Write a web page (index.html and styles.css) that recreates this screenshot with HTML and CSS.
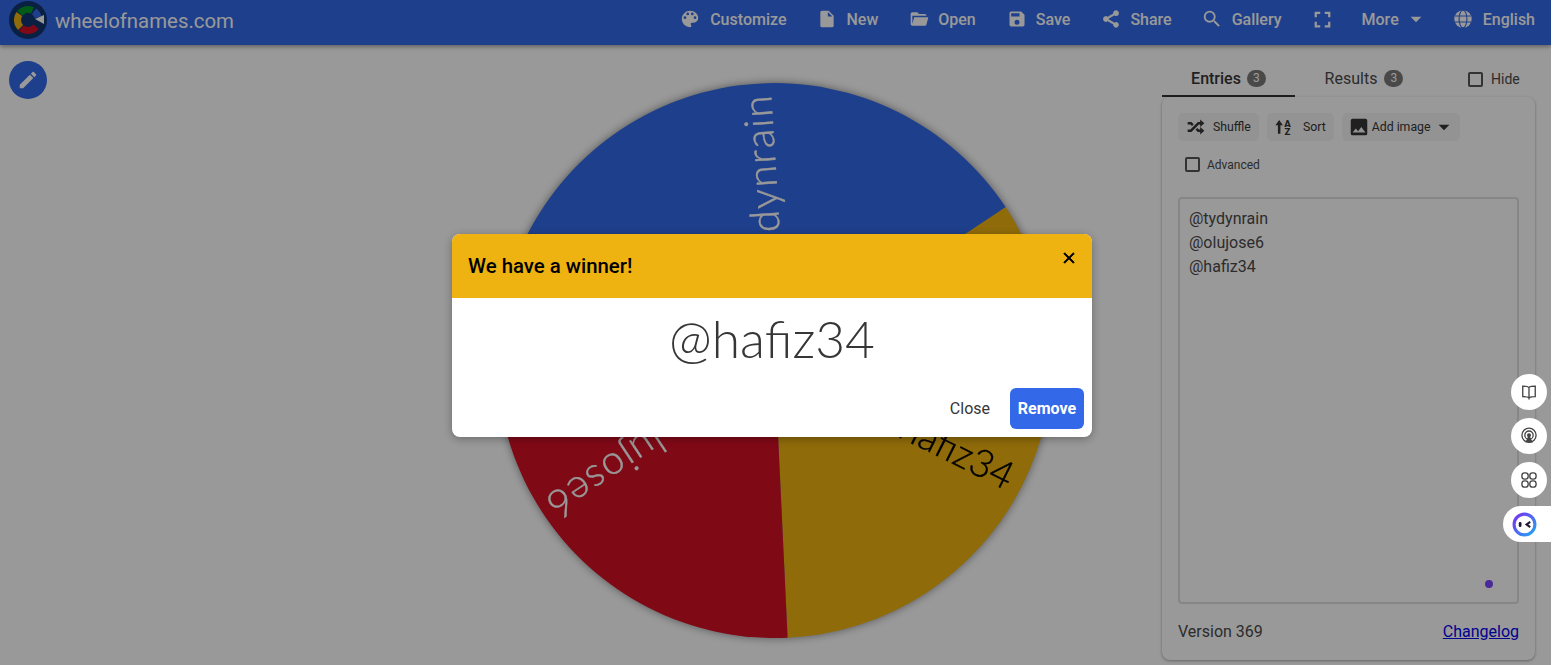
FILE: index.html
```html
<!DOCTYPE html>
<html lang="en">
<head>
  <meta charset="UTF-8" />
  <title>Wheel of Names</title>
  <link rel="stylesheet" href="styles.css">
</head>
<body>
<div class="app">
  <header class="topbar">
    <a class="brand">
      <svg class="logo" viewBox="0 0 38 38">
        <circle cx="19" cy="19" r="19" fill="#12366f"/>
        <g fill="none" stroke-width="7">
          <path d="M10.96 12.25A10.5 10.5 0 0 1 23.44 9.48" stroke="#009925"/>
          <path d="M25.02 10.4A10.5 10.5 0 0 1 29.14 16.28" stroke="#3369e8"/>
          <path d="M11.58 26.42A10.5 10.5 0 0 1 10.4 12.97" stroke="#eeb211"/>
          <path d="M27.04 25.75A10.5 10.5 0 0 1 12.25 27.04" stroke="#d50f25"/>
        </g>
        <path d="M26 18L35 14V23Z" fill="#fff"/>
      </svg>
      <span class="brand-name">wheelofnames.com</span>
    </a>
    <nav class="menu">
      <a class="menu-item"><svg class="ico" viewBox="0 0 24 24"><path d="M17.5,12A1.5,1.5 0 0,1 16,10.5A1.5,1.5 0 0,1 17.5,9A1.5,1.5 0 0,1 19,10.5A1.5,1.5 0 0,1 17.5,12M14.5,8A1.5,1.5 0 0,1 13,6.5A1.5,1.5 0 0,1 14.5,5A1.5,1.5 0 0,1 16,6.5A1.5,1.5 0 0,1 14.5,8M9.5,8A1.5,1.5 0 0,1 8,6.5A1.5,1.5 0 0,1 9.5,5A1.5,1.5 0 0,1 11,6.5A1.5,1.5 0 0,1 9.5,8M6.5,12A1.5,1.5 0 0,1 5,10.5A1.5,1.5 0 0,1 6.5,9A1.5,1.5 0 0,1 8,10.5A1.5,1.5 0 0,1 6.5,12M12,3A9,9 0 0,0 3,12A9,9 0 0,0 12,21A1.5,1.5 0 0,0 13.5,19.5C13.5,19.11 13.35,18.76 13.11,18.5C12.88,18.23 12.73,17.88 12.73,17.5A1.5,1.5 0 0,1 14.23,16H16A5,5 0 0,0 21,11C21,6.58 16.97,3 12,3Z"/></svg>Customize</a>
      <a class="menu-item"><svg class="ico ico-sm" viewBox="0 0 24 24"><path d="M13,9V3.5L18.5,9M6,2C4.89,2 4,2.89 4,4V20A2,2 0 0,0 6,22H18A2,2 0 0,0 20,20V8L14,2H6Z"/></svg>New</a>
      <a class="menu-item"><svg class="ico ico-sm" viewBox="0 0 24 24"><path d="M19,20H4C2.89,20 2,19.1 2,18V6C2,4.89 2.89,4 4,4H10L12,6H19A2,2 0 0,1 21,8H21L4,8V18L6.14,10H23.21L20.93,18.5C20.7,19.37 19.92,20 19,20Z"/></svg>Open</a>
      <a class="menu-item"><svg class="ico ico-sm" viewBox="0 0 24 24"><path d="M15,9H5V5H15M12,19A3,3 0 0,1 9,16A3,3 0 0,1 12,13A3,3 0 0,1 15,16A3,3 0 0,1 12,19M17,3H5C3.89,3 3,3.9 3,5V19A2,2 0 0,0 5,21H19A2,2 0 0,0 21,19V7L17,3Z"/></svg>Save</a>
      <a class="menu-item"><svg class="ico ico-sm" viewBox="0 0 24 24"><path d="M18,16.08C17.24,16.08 16.56,16.38 16.04,16.85L8.91,12.7C8.96,12.47 9,12.24 9,12C9,11.76 8.96,11.53 8.91,11.3L15.96,7.19C16.5,7.69 17.21,8 18,8A3,3 0 0,0 21,5A3,3 0 0,0 18,2A3,3 0 0,0 15,5C15,5.24 15.04,5.47 15.09,5.7L8.04,9.81C7.5,9.31 6.79,9 6,9A3,3 0 0,0 3,12A3,3 0 0,0 6,15C6.79,15 7.5,14.69 8.04,14.19L15.16,18.34C15.11,18.55 15.08,18.77 15.08,19C15.08,20.61 16.39,21.91 18,21.91C19.61,21.91 20.92,20.61 20.92,19A2.92,2.92 0 0,0 18,16.08Z" stroke="currentColor" stroke-width="1"/></svg>Share</a>
      <a class="menu-item"><svg class="ico" viewBox="0 0 24 24"><path d="M9.5,3A6.5,6.5 0 0,1 16,9.5C16,11.11 15.41,12.59 14.44,13.73L14.71,14H15.5L20.5,19L19,20.5L14,15.5V14.71L13.73,14.44C12.59,15.41 11.11,16 9.5,16A6.5,6.5 0 0,1 3,9.5A6.5,6.5 0 0,1 9.5,3M9.5,5C7,5 5,7 5,9.5C5,12 7,14 9.5,14C12,14 14,12 14,9.5C14,7 12,5 9.5,5Z"/></svg>Gallery</a>
      <a class="menu-item"><svg class="ico ico-full" viewBox="0 0 24 24"><path d="M5,5H10V7H7V10H5V5M14,5H19V10H17V7H14V5M17,14H19V19H14V17H17V14M10,17V19H5V14H7V17H10Z"/></svg></a>
      <a class="menu-item">More<svg class="ico caret" viewBox="0 0 24 24"><path d="M7,10L12,15L17,10H7Z"/></svg></a>
      <a class="menu-item"><svg class="ico" viewBox="0 0 24 24"><circle cx="12" cy="12" r="9.5"/><g fill="none" stroke="#3369e8" stroke-width="1.2"><ellipse cx="12" cy="12" rx="4.3" ry="9.5"/><path d="M3 8.8H21M3 15.2H21"/></g></svg>English</a>
    </nav>
  </header>

  <main class="main">
    <section class="wheel-area">
      <button class="edit-btn"><svg class="ico" viewBox="0 0 24 24"><path d="M20.71,7.04C21.1,6.65 21.1,6 20.71,5.63L18.37,3.29C18,2.9 17.35,2.9 16.96,3.29L15.12,5.12L18.87,8.87M3,17.25V21H6.75L17.81,9.93L14.06,6.18L3,17.25Z"/></svg></button>
      <svg class="wheel" viewBox="0 0 555 555">
        <path d="M277.5 277.5L508.6 124A277.5 277.5 0 0 1 290.6 554.7Z" fill="#eeb211"/>
        <path d="M277.5 277.5L290.6 554.7A277.5 277.5 0 0 1 29.2 153.7Z" fill="#d50f25"/>
        <path d="M277.5 277.5L29.2 153.7A277.5 277.5 0 0 1 508.6 124Z" fill="#3369e8"/>
        <text class="wheel-label label-wide" transform="translate(277.5 277.5) rotate(-93.5)" x="267" y="13" fill="#fff" stroke="#fff">@tydynrain</text>
        <text class="wheel-label" transform="translate(277.5 277.5) rotate(26.5)" x="265" y="13" fill="#000" stroke="#000">@hafiz34</text>
        <text class="wheel-label label-wide" transform="translate(277.5 277.5) rotate(146.5)" x="270" y="13" fill="#fff" stroke="#fff">@olujose6</text>
      </svg>
    </section>

    <aside class="sidebar">
      <div class="tabs">
        <div class="tab tab-active">Entries <span class="badge">3</span></div>
        <div class="tab tab-results">Results <span class="badge">3</span></div>
        <label class="check hide-check"><span class="box"></span>Hide</label>
      </div>
      <div class="card">
        <div class="tools">
          <button class="tool"><svg class="ico" viewBox="0 0 24 24"><path d="M17,3L22,7.5L17,12V9H15.5L6.5,18H2V15H5.26L14.26,6H17V3M17,12L22,16.5L17,21V18H14.26L11.44,15.18L13.56,13.06L15.5,15H17V12M2,6H6.5L9.32,8.82L7.2,10.94L5.26,9H2V6Z"/></svg>Shuffle</button>
          <button class="tool tool-sort"><svg class="ico" viewBox="0 0 24 24"><path d="M5 3.5L9.5 10H6.5V20H3.5V10H.5Z"/><text class="az" x="15" y="11.5">A</text><text class="az" x="15" y="21">Z</text></svg>Sort</button>
          <button class="tool tool-image"><svg class="ico" viewBox="0 0 24 24"><path d="M8.5,13.5L11,16.5L14.5,12L19,18H5M21,19V5C21,3.89 20.1,3 19,3H5A2,2 0 0,0 3,5V19A2,2 0 0,0 5,21H19A2,2 0 0,0 21,19Z"/></svg>Add image<svg class="ico tool-caret" viewBox="0 0 24 24"><path d="M7,10L12,15L17,10H7Z"/></svg></button>
        </div>
        <label class="check adv-check"><span class="box"></span>Advanced</label>
        <div class="entries">
          <div>@tydynrain</div>
          <div>@olujose6</div>
          <div>@hafiz34</div>
          <span class="dot"></span>
        </div>
        <div class="card-foot">
          <span>Version 369</span>
          <a class="link" href="#">Changelog</a>
        </div>
      </div>
    </aside>
  </main>

  <div class="overlay">
    <div class="modal">
      <div class="modal-head">
        <span class="modal-title">We have a winner!</span>
        <svg class="modal-x" viewBox="0 0 24 24"><path d="M19,6.41L17.59,5L12,10.59L6.41,5L5,6.41L10.59,12L5,17.59L6.41,19L12,13.41L17.59,19L19,17.59L13.41,12L19,6.41Z"/></svg>
      </div>
      <div class="modal-body">@hafiz34</div>
      <div class="modal-foot">
        <button class="btn-plain">Close</button>
        <button class="btn-remove">Remove</button>
      </div>
    </div>
  </div>

  <div class="widgets">
    <div class="widget">
      <svg viewBox="0 0 24 24"><path d="M12 6.5C10.5 5.2 8 5 4.5 5V17.5C8 17.5 10.5 17.8 12 19C13.5 17.8 16 17.5 19.5 17.5V5C16 5 13.5 5.2 12 6.5ZM12 6.5V21"/></svg>
    </div>
    <div class="widget">
      <svg viewBox="0 0 24 24"><circle cx="12" cy="11" r="8.5"/><circle cx="12" cy="11" r="5"/><circle cx="12" cy="11" r="1.6" fill="#444"/><path d="M12 12L8.8 19H15.2Z" fill="#444"/></svg>
    </div>
    <div class="widget">
      <svg viewBox="0 0 24 24"><rect x="3.5" y="3.5" width="7.5" height="7.5" rx="3.2"/><rect x="13" y="3.5" width="7.5" height="7.5" rx="3.2"/><rect x="3.5" y="13" width="7.5" height="7.5" rx="3.2"/><rect x="13" y="13" width="7.5" height="7.5" rx="3.2"/></svg>
    </div>
    <div class="widget-pill">
      <svg viewBox="0 0 24 24">
        <defs><linearGradient id="ring" x1="0" y1="0" x2="1" y2="1"><stop offset="0" stop-color="#7b2ff0"/><stop offset="1" stop-color="#21a6f3"/></linearGradient></defs>
        <circle cx="12" cy="12" r="10" fill="none" stroke="url(#ring)" stroke-width="3"/>
        <rect x="6.5" y="9.5" width="2.6" height="5" rx="1.2" fill="#1c1c2e"/>
        <path d="M17.5 9.5L14 12L17.5 14.5" fill="none" stroke="#1c1c2e" stroke-width="2"/>
      </svg>
    </div>
  </div>
</div>
</body>
</html>
```

FILE: styles.css
```css
* {
  margin: 0;
  padding: 0;
  box-sizing: border-box;
}

html, body {
  height: 100%;
  overflow: hidden;
  background: #fff;
  font-family: Roboto, "Liberation Sans", sans-serif;
  color: #363636;
}

button {
  font-family: inherit;
  border: 0;
  background: none;
}

.app {
  position: relative;
  width: 1551px;
  height: 665px;
  overflow: hidden;
  display: flex;
  flex-direction: column;
  background: #fff;
}

.ico {
  width: 22px;
  height: 22px;
  fill: currentColor;
  flex: none;
}

/* top bar */
.topbar {
  height: 45px;
  flex: none;
  display: flex;
  align-items: center;
  justify-content: space-between;
  padding: 0 16px 0 9px;
  background: #3369e8;
  color: #fff;
  box-shadow: 0 2px 4px rgba(0,0,0,0.35);
  position: relative;
  z-index: 2;
}

.brand {
  display: flex;
  align-items: center;
  gap: 8px;
  margin-top: -5px;
}

.logo {
  width: 38px;
  height: 38px;
}

.brand-name {
  font-size: 20.4px;
  margin-top: 1px;
}

.menu {
  display: flex;
  align-items: center;
  gap: 29px;
  margin-top: -7px;
}

.menu-item {
  display: flex;
  align-items: center;
  gap: 9px;
  font-size: 16px;
  font-weight: 500;
}

.ico-sm {
  width: 20px;
  height: 20px;
  margin-left: 2px;
}

.ico-full {
  width: 27px;
  height: 27px;
  margin: 0 -3px 0 -2px;
}

.caret {
  width: 26px;
  height: 26px;
  margin-left: -5px;
  margin-right: -6px;
}

/* wheel */
.main {
  flex: 1;
  min-height: 0;
  display: flex;
}

.wheel-area {
  flex: 1;
  position: relative;
  display: flex;
  justify-content: flex-end;
  padding: 38px 110px 0 0;
}

.edit-btn {
  position: absolute;
  left: 9px;
  top: 16px;
  width: 38px;
  height: 38px;
  border-radius: 50%;
  background: #3369e8;
  color: #fff;
  display: flex;
  align-items: center;
  justify-content: center;
}

.wheel {
  width: 555px;
  height: 555px;
  overflow: visible;
  filter: drop-shadow(0 0 4px rgba(0,0,0,0.45));
}

.wheel-label {
  font-family: Lato, "Open Sans", sans-serif;
  font-weight: 300;
  font-size: 38.5px;
  stroke-width: 0.4px;
  text-anchor: end;
}

.label-wide {
  font-size: 40px;
  letter-spacing: 1.5px;
}

/* right side */
.sidebar {
  width: 373px;
  flex: none;
  margin-right: 16px;
  padding-top: 15px;
  display: flex;
  flex-direction: column;
}

.tabs {
  height: 37px;
  flex: none;
  display: flex;
  align-items: flex-start;
}

.tab {
  width: 133px;
  height: 37px;
  display: flex;
  justify-content: center;
  align-items: center;
  gap: 6px;
  font-size: 16px;
  color: #4a4a4a;
  padding-bottom: 1px;
}

.tab-results {
  width: 138px;
  gap: 7px;
}

.tab-active {
  font-weight: 500;
  color: #363636;
  border-bottom: 2px solid #333;
  padding: 1px 0 0;
}

.badge {
  width: 19px;
  height: 17px;
  border-radius: 9px;
  background: #7a7a7a;
  color: #fff;
  font-size: 12px;
  font-weight: 400;
  display: flex;
  align-items: center;
  justify-content: center;
}

.check {
  display: flex;
  align-items: center;
  gap: 8px;
  color: #4a4a4a;
}

.box {
  width: 15px;
  height: 15px;
  border: 2px solid #555;
  border-radius: 2px;
}

.hide-check {
  margin: 11px 0 0 35px;
  font-size: 14px;
}

.card {
  height: 563px;
  padding: 16px;
  border-radius: 8px;
  background: #fff;
  box-shadow: 0 1px 3px rgba(0,0,0,0.35);
  display: flex;
  flex-direction: column;
}

.tools {
  display: flex;
  gap: 8px;
}

.tool {
  height: 28px;
  padding: 0 8px;
  border-radius: 5px;
  background: #f5f5f5;
  color: #363636;
  font-size: 12.3px;
  display: flex;
  align-items: center;
}

.tool .ico {
  width: 20px;
  height: 20px;
  margin-right: 7px;
}

.tool-sort .ico {
  margin-right: 8px;
}

.tool-image .ico {
  width: 22px;
  height: 22px;
  margin: 0 2px 0 -2px;
}

.tool .tool-caret {
  width: 26px;
  height: 26px;
  margin: 0 -5px 0 0;
}

.az {
  font-size: 11.5px;
  font-weight: 900;
  text-anchor: middle;
}

.adv-check {
  margin: 16px 0 0 7px;
  height: 15px;
  font-size: 12px;
  gap: 7px;
}

.entries {
  position: relative;
  height: 407px;
  flex: none;
  margin-top: 25px;
  padding: 8px 9px;
  border: 2px solid #e0e0e0;
  border-radius: 4px;
  font-size: 16px;
  line-height: 24px;
  color: #4a4a4a;
}

.dot {
  position: absolute;
  right: 24px;
  bottom: 14px;
  width: 8px;
  height: 8px;
  border-radius: 50%;
  background: #7b46ff;
}

.card-foot {
  display: flex;
  justify-content: space-between;
  margin-top: 18px;
  font-size: 16px;
  color: #4a4a4a;
}

.link {
  color: #0000ee;
}

/* winner dialog */
.overlay {
  position: absolute;
  inset: 0;
  z-index: 5;
  background: rgba(0,0,0,0.4);
}

.modal {
  width: 640px;
  margin: 234px 0 0 452px;
  border-radius: 8px;
  overflow: hidden;
  background: #fff;
  box-shadow: 0 2px 8px rgba(0,0,0,0.3);
}

.modal-head {
  height: 64px;
  padding: 0 14px 0 16px;
  background: #eeb211;
  color: #000;
  display: flex;
  justify-content: space-between;
  align-items: center;
}

.modal-title {
  font-size: 20.4px;
  font-weight: 500;
}

.modal-x {
  width: 18px;
  height: 18px;
  margin-top: -16px;
  stroke: #000;
  stroke-width: 1;
}

.modal-body {
  height: 90px;
  padding-bottom: 10px;
  display: flex;
  align-items: center;
  justify-content: center;
  font-family: Lato, "Open Sans", sans-serif;
  font-weight: 300;
  font-size: 51.5px;
  color: #363636;
}

.modal-foot {
  height: 49px;
  padding: 0 8px 8px;
  display: flex;
  justify-content: flex-end;
  align-items: center;
  gap: 20px;
}

.btn-plain {
  font-size: 16px;
  font-weight: 400;
  color: #363636;
}

.btn-remove {
  width: 74px;
  height: 41px;
  border-radius: 6px;
  background: #3369e8;
  color: #fff;
  font-size: 16px;
  font-weight: 700;
}

/* floating helpers */
.widgets {
  position: absolute;
  right: 0;
  top: 374px;
  z-index: 6;
  display: flex;
  flex-direction: column;
  align-items: flex-end;
  gap: 8px;
}

.widget {
  width: 36px;
  height: 36px;
  margin-right: 4px;
  border-radius: 50%;
  background: #fff;
  display: flex;
  align-items: center;
  justify-content: center;
}

.widget svg {
  width: 20px;
  height: 20px;
  fill: none;
  stroke: #444;
  stroke-width: 1.6;
}

.widget-pill {
  width: 48px;
  height: 36px;
  border-radius: 18px 0 0 18px;
  background: #fff;
  display: flex;
  align-items: center;
  padding-left: 9px;
}

.widget-pill svg {
  width: 25px;
  height: 25px;
}
```
